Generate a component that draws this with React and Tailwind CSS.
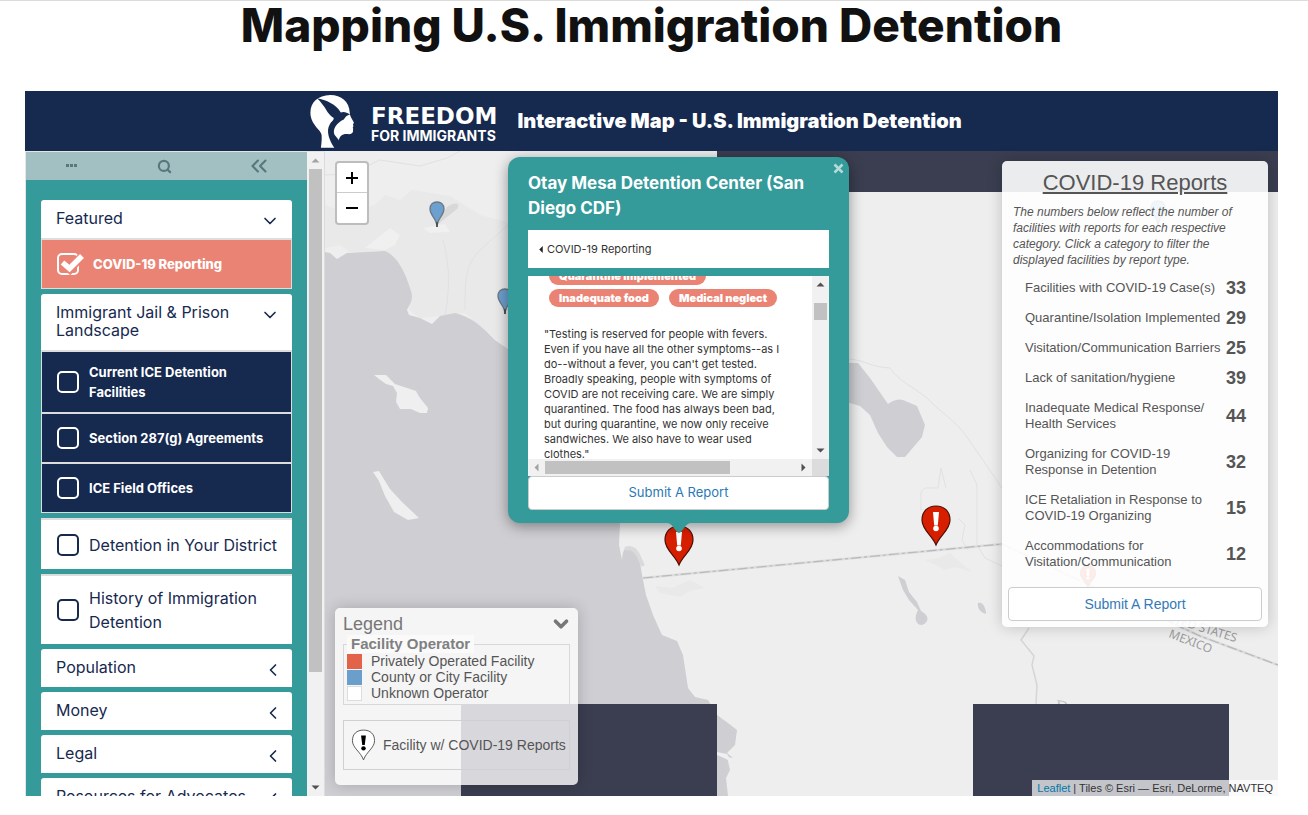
import { ChevronDown, ChevronLeft, ChevronsLeft, Search } from "lucide-react";

const cardFont = "font-['Inter','Open_Sans',sans-serif]";
const mapFont = "font-['Liberation_Sans',Arial,sans-serif]";

function Logo() {
  return (
    <a href="#home" className="flex items-center gap-4 text-white">
      <svg viewBox="272 282 134 160" className="h-[53px] w-[45px]" aria-hidden="true">
        <path
          fill="#fff"
          d="M304 441 C306 425 307 415 306 402 C303 388 278 375 273 345 C268 308 292 283 332 282 C366 282 390 302 391 335 C391 344 396 352 403 364 C405 368 400 369 401 372 C403 376 402 378 400 380 C402 383 401 385 401 388 C402 396 396 401 385 400 C366 399 362 407 358 418 L345 441 Z"
        />
        <path
          fill="#16294f"
          d="M292 292 C320 297 350 310 364 335 C372 331 382 334 392 341 C382 343 378 349 373 356 C352 366 338 385 345 402 L358 418 L362 442 L345 442 C330 420 318 390 331 370 C336 363 345 357 342 351 C325 340 322 328 313 316 C306 308 302 300 292 292 Z"
        />
      </svg>
      <span className="flex flex-col pt-1">
        <span className="font-['DejaVu_Sans',sans-serif] text-[23px] leading-[24px] font-bold">FREEDOM</span>
        <span className="font-['Inter',sans-serif] text-[14px] leading-[15px] font-bold">FOR IMMIGRANTS</span>
      </span>
    </a>
  );
}

function CheckRow({ label, checked = false, tone }) {
  const tones = {
    coral: "bg-[#ea8374] text-white font-extrabold text-[13px] leading-5 min-h-[51px] border-x border-b border-t-2 border-[#dddddd] pl-[15px] pr-4",
    navy: "bg-[#16294f] text-white font-bold text-[13px] leading-5 min-h-[50px] border-x border-t-2 border-[#dddddd] last:border-b last:min-h-[51px] pl-[15px] pr-4",
    white: "bg-white text-[#16294f] text-base leading-6 border-t-2 border-[#dddddd] min-h-[51px] pl-4 pr-1",
  };
  return (
    <label className={`flex items-center gap-2.5 py-[10px] ${tones[tone]}`}>
      <span className="relative flex shrink-0">
        <input
          type="checkbox"
          defaultChecked={checked}
          className="peer size-[22px] appearance-none rounded-[5px] border-2 border-current"
        />
        <svg viewBox="0 0 28 24" className="pointer-events-none absolute top-0 left-0 hidden h-6 w-7 peer-checked:block" aria-hidden="true">
          <path d="M7 11 L13 16.500 L24 4" fill="none" stroke="#ea8374" strokeWidth="8" />
          <path d="M5.500 9.500 L12.500 15.500 L25 3" fill="none" stroke="currentColor" strokeWidth="5.500" />
        </svg>
      </span>
      <span className={checked ? "pl-1" : ""}>{label}</span>
    </label>
  );
}

function SectionButton({ label, open = false }) {
  return (
    <button
      type="button"
      aria-expanded={open}
      className="flex w-full shrink-0 items-start justify-between gap-4 rounded-t-[3px] bg-white px-[15px] pt-[9px] pb-[11px] text-left text-base leading-[18px] text-[#16294f]"
    >
      <span className={open ? "" : "whitespace-nowrap"}>{label}</span>
      {open ? (
        <ChevronDown className="mt-0.5 -mr-[3px] -mb-4 size-5 shrink-0" strokeWidth={2} />
      ) : (
        <ChevronLeft className="mt-0.5 -mr-1.5 -mb-4 size-5 shrink-0" strokeWidth={2} />
      )}
    </button>
  );
}

function Arrow({ dir, muted = false }) {
  const paths = {
    up: "M4.500 10.500 L8.500 6.500 L12.500 10.500 Z",
    down: "M4.500 6.500 L8.500 10.500 L12.500 6.500 Z",
    left: "M10.500 4.500 L6.500 8.500 L10.500 12.500 Z",
    right: "M6.500 4.500 L10.500 8.500 L6.500 12.500 Z",
  };
  return (
    <svg viewBox="0 0 17 17" className="size-[17px] shrink-0" aria-hidden="true">
      <path d={paths[dir]} fill={muted ? "#a3a3a3" : "#505050"} />
    </svg>
  );
}

function Sidebar() {
  return (
    <div className="flex shrink-0 border-t border-l border-[#e5e5e5]">
      <nav className={`flex w-[281px] flex-col overflow-hidden bg-[#349a9a] ${cardFont}`}>
        <div className="flex h-7 shrink-0 items-center justify-between bg-[#a2bfc1] pr-[35px] pl-[40px] text-[#55797d]">
          <button type="button" aria-label="Menu" className="flex gap-px pb-0.5">
            <i className="size-[3px] bg-current" />
            <i className="size-[3px] bg-current" />
            <i className="size-[3px] bg-current" />
          </button>
          <button type="button" aria-label="Search" className="pl-1.5"><Search className="size-[15px]" strokeWidth={3.5} /></button>
          <button type="button" aria-label="Collapse">
            <ChevronsLeft className="size-[26px]" strokeWidth={2} />
          </button>
        </div>
        <div className="flex flex-col gap-[5px] px-[15px] pt-5">
          <section>
            <SectionButton label="Featured" open />
            <CheckRow label="COVID-19 Reporting" tone="coral" checked />
          </section>
          <section>
            <SectionButton label="Immigrant Jail & Prison Landscape" open />
            <CheckRow label="Current ICE Detention Facilities" tone="navy" />
            <CheckRow label="Section 287(g) Agreements" tone="navy" />
            <CheckRow label="ICE Field Offices" tone="navy" />
          </section>
          <CheckRow label="Detention in Your District" tone="white" />
          <CheckRow label="History of Immigration Detention" tone="white" />
          <SectionButton label="Population" />
          <SectionButton label="Money" />
          <SectionButton label="Legal" />
          <SectionButton label="Resources for Advocates" />
        </div>
      </nav>
      <div className="flex w-[18px] flex-col items-center border-r border-[#dcdcdc] bg-[#f1f1f1]" aria-hidden="true">
        <Arrow dir="up" muted />
        <div className="w-[13px] basis-[503px] bg-[#c1c1c1]" />
        <div className="flex-1" />
        <Arrow dir="down" />
      </div>
    </div>
  );
}

function RedPin({ x, y, scale = 1, opacity = 1 }) {
  return (
    <g transform={`translate(${x} ${y}) scale(${scale})`} opacity={opacity}>
      <path d="M0 0 C-4 -10 -14 -15 -14 -25 C-14 -34 -8 -39 0 -39 C8 -39 14 -34 14 -25 C14 -15 4 -10 0 0 Z" fill="#d71f00" stroke="#4a1008" strokeWidth="1.200" />
      <path d="M-3 -33 H3 L1.800 -19.500 H-1.800 Z" fill="#fff" />
      <circle cx="0" cy="-16.500" r="2.800" fill="#fff" />
    </g>
  );
}

function BluePin({ x, y }) {
  return (
    <g transform={`translate(${x} ${y})`}>
      <path d="M0 -2 L10 -20 C18 -26 24 -24 20 -18 Z" fill="#000" opacity="0.070" />
      <path d="M0 0 C0 -9 -7 -11 -7 -18 C-7 -22.500 -4 -25 0 -25 C4 -25 7 -22.500 7 -18 C7 -11 0 -9 0 0 Z" fill="#6ba0cf" stroke="#6b7885" strokeWidth="1.300" />
      <path d="M0 0 V-5" stroke="#444" strokeWidth="1.500" />
    </g>
  );
}

function MapCanvas() {
  return (
    <svg className="absolute inset-0 size-full" role="img" aria-label="Map of Southern California and northern Baja California">
      <g transform="translate(-325 -151)">
        <path fill="#e9e9e9" d="M325 205 L345 212 L375 205 L385 195 L400 200 L412 190 L450 196 L480 215 L508 222 V350 L480 325 L465 313 L440 316 L420 318 L409 310 L412 297 L400 265 L385 251 L350 252 L340 245 L325 248 Z" />
        <path fill="#f0f0f0" d="M375 240 L390 228 L400 235 L395 245 L385 250 L365 248 Z M423 228 L445 224 L450 232 L430 233 Z" />
        <g fill="none" stroke="#e1e1e3" strokeWidth="1">
          <path d="M325 175 L350 174 L380 160 L420 166 L447 158 L460 151" />
          <path d="M443 240 C450 265 450 290 445 315 M465 310 C465 280 465 265 480 250 L508 225" />
          <path d="M849 359 C865 360 870 367 890 368 C898 380 910 385 927 398 C940 412 955 420 967 437 L1002 488" />
          <path d="M921 510 V492 L925 488 H938 L941 468 L946 488" />
          <path d="M970 470 L977 485 V545 L985 558 L1002 566" />
          <path d="M958 518 L965 525 L962 540 L968 550" />
        </g>
        <path
          fill="#cfced3"
          d="M325 252 L330 253 L337 259 L347 253 L385 251 C398 256 406 275 410 288 C415 300 409 305 407 310 L409 315 L420 318 L432 324 L440 316 L455 313 C475 318 485 330 495 340 L512 352 L560 420 L605 500 L620 524 L619 545 L622 560 C623 543 630 545 636 554 L640 563 L643 580 L646 595 L653 615 L662 635 L677 641 L683 655 L688 688 L695 697 L708 700 L717 715 L728 723 L737 730 L735 745 L727 753 L733 758 L727 757 L730 770 L726 778 L728 796 V1200 H325 Z"
        />
        <g fill="#efeff0">
          <path d="M374 375 L386 375 L392 381 L395 384 L404 387 L416 391 L420 398 L428 408 L427 413 L420 413 L411 409 L400 409 L396 402 L397 393 L393 386 L386 384 L379 379 Z" />
          <path d="M373 472 L379 471 L390 489 L402 502 L419 518 L408 520 L394 512 L385 496 L379 481 Z" />
          <path d="M717 752 L727 754 L732 762 L724 758 L717 755 Z" />
        </g>
        <path fill="#cfced3" d="M840 363 L858 363 L870 378 L888 404 C895 399 900 399 903 400 L917 406 L925 425 L922 437 L905 457 L897 457 L887 447 L878 433 L870 415 L860 406 L840 400 Z" />
        <g fill="#cfced3">
          <path d="M898 576 L905 580 L909 592 L917 602 L921 611 C929 615 930 622 922 625 C915 625 914 617 918 610 L909 600 L903 590 Z" />
          <path d="M978 603 C983 601 986 608 986 614 C980 612 977 608 978 603 Z" />
        </g>
        <path d="M625 549 C632 546 636 550 639 557 L643 566" fill="none" stroke="#dadadc" strokeWidth="4" />
        <path fill="#e9e9e9" d="M655 586 L672 588 L690 580 L705 588 L690 591 L680 597 L660 593 Z M925 560 L940 558 L950 553 L960 562 L972 572 L955 567 L945 570 Z" />
        <path d="M643 578 L1002 544 L1100 590 L1200 636 L1278 665" fill="none" stroke="#dcdcde" strokeWidth="2.500" />
        <path d="M643 578 L1002 544 L1100 590 L1200 636 L1278 665" fill="none" stroke="#b9b9bc" strokeWidth="1.200" strokeDasharray="10 3 3 3" />
        <path d="M1029 628 L1021 640 L1034 656 L1032 665 L1037 685 L1036 704" fill="none" stroke="#d5d5d7" strokeWidth="1.500" />
        <g className="font-['Noto_Sans',sans-serif]" fill="#9b9b9d">
          <text x="1153" y="617" fontSize="12" transform="rotate(17 1153 617)">UNITED STATES</text>
          <text x="1168" y="637" fontSize="12" transform="rotate(21 1168 637)">MEXICO</text>
        </g>
        <text x="1055" y="711" fontSize="17" fill="#c4c4c6" transform="rotate(8 1055 711)" className="font-['Liberation_Serif',serif]">D</text>
        <BluePin x={437} y={227} />
        <BluePin x={505} y={314} />
        <BluePin x={1158} y={226} />
        <g fill="#3b3e50">
          <rect x="717" y="151" width="4000" height="41" />
          <rect x="461" y="704" width="256" height="256" />
          <rect x="973" y="704" width="256" height="256" />
        </g>
        <RedPin x={679} y={565} />
        <RedPin x={936} y={545} />
        <RedPin x={1088} y={587} scale={0.55} opacity={0.8} />
      </g>
    </svg>
  );
}

const pill = "rounded-[9px] bg-[#ea8374] px-2.5 text-[11px] leading-[18px] font-black text-white";

function FacilityPopup() {
  return (
    <section className={`absolute top-[6px] left-[183px] w-[341px] rounded-xl bg-[#349a9a] px-5 pt-[14px] pb-[13px] shadow-[0_3px_14px_rgba(0,0,0,0.4)] ${cardFont}`}>
      <button type="button" aria-label="Close" className="absolute top-[6px] right-[5px] text-[#b5dada]">
        <svg viewBox="0 0 11 11" className="size-[11px]" aria-hidden="true">
          <path d="M1.500 1.500 L9.500 9.500 M9.500 1.500 L1.500 9.500" stroke="currentColor" strokeWidth="2.500" />
        </svg>
      </button>
      <h2 className="text-[17px] leading-[25px] font-bold text-white">Otay Mesa Detention Center (San Diego CDF)</h2>
      <button type="button" className="mt-[9px] flex h-[38px] w-full items-center gap-1 bg-white px-[11px] text-[11px] text-[#333]">
        <svg viewBox="0 0 4 8" className="h-[7px] w-1" aria-hidden="true"><path d="M4 0 V8 L0 4 Z" fill="#222" /></svg>
        COVID-19 Reporting
      </button>
      <div className="mt-2 grid h-[200px] grid-cols-[1fr_17px] grid-rows-[1fr_17px] bg-[#f1f1f1]">
        <div className="min-h-0 overflow-hidden bg-white px-4">
          <div className="-mt-[9px] flex flex-wrap gap-x-2.5 gap-y-1 pl-[5px]">
            <span className={pill}>Quarantine Implemented</span>
            <span className={pill}>Inadequate food</span>
            <span className={pill}>Medical neglect</span>
          </div>
          <p className="mt-5 w-[240px] text-[11px] leading-[15px] text-[#333]">
            "Testing is reserved for people with fevers. Even if you have all the other symptoms--as I do--without a fever, you can't get tested. Broadly speaking, people with symptoms of COVID are not receiving care. We are simply quarantined. The food has always been bad, but during quarantine, we now only receive sandwiches. We also have to wear used clothes."
          </p>
        </div>
        <div className="flex flex-col items-center" aria-hidden="true">
          <Arrow dir="up" />
          <div className="mt-2.5 h-[17px] w-[13px] bg-[#c1c1c1]" />
          <div className="flex-1" />
          <Arrow dir="down" />
        </div>
        <div className="flex items-center" aria-hidden="true">
          <Arrow dir="left" muted />
          <div className="h-[13px] w-[185px] bg-[#c1c1c1]" />
          <div className="flex-1" />
          <Arrow dir="right" />
        </div>
        <div className="bg-[#dcdcdc]" />
      </div>
      <a href="#report" className="flex h-[34px] items-center justify-center rounded border border-[#ccc] bg-white text-[13px] text-[#2a7ab5]">Submit A Report</a>
      <svg viewBox="0 0 22 10" className="absolute top-full left-[160px] h-2.5 w-[22px]" aria-hidden="true">
        <path d="M0 0 H22 C17 1 14 10 11 10 C8 10 5 1 0 0 Z" fill="#349a9a" />
      </svg>
    </section>
  );
}

const reports = [
  ["Facilities with COVID-19 Case(s)", 33],
  ["Quarantine/Isolation Implemented", 29],
  ["Visitation/Communication Barriers", 25],
  ["Lack of sanitation/hygiene", 39],
  ["Inadequate Medical Response/ Health Services", 44],
  ["Organizing for COVID-19 Response in Detention", 32],
  ["ICE Retaliation in Response to COVID-19 Organizing", 15],
  ["Accommodations for Visitation/Communication", 12],
];

function ReportsPanel() {
  return (
    <section className={`absolute top-2.5 right-2.5 w-[266px] rounded-[5px] bg-white/90 p-1.5 text-[#555] shadow-[0_0_15px_rgba(0,0,0,0.2)] ${mapFont}`}>
      <h2 className="pt-[3px] text-center text-[22px] leading-[26px] underline">COVID-19 Reports</h2>
      <p className="mt-2 px-[5px] text-xs leading-4 italic">
        The numbers below reflect the number of facilities with reports for each respective category. Click a category to filter the displayed facilities by report type.
      </p>
      <table className="mt-[5px] ml-[17px]">
        <tbody>
          {reports.map(([label, count]) => (
            <tr key={label}>
              <th scope="row" className="py-[7px] text-left text-[13px] leading-4 font-normal">
                <button type="button" className="w-[197px] text-left align-top">{label}</button>
              </th>
              <td className="py-0 pl-1 text-lg leading-4 font-bold">{count}</td>
            </tr>
          ))}
        </tbody>
      </table>
      <a href="#report" className="mt-[10px] flex h-[34px] items-center justify-center rounded border border-[#ccc] bg-white text-sm text-[#337ab7]">Submit A Report</a>
    </section>
  );
}

function LegendPanel() {
  const operators = [
    ["Privately Operated Facility", "bg-[#e2624a] border-[#e2624a]"],
    ["County or City Facility", "bg-[#6b9fcb] border-[#6b9fcb]"],
    ["Unknown Operator", "bg-white border-[#ddd]"],
  ];
  return (
    <section className={`absolute bottom-[11px] left-2.5 w-[243px] rounded-[5px] bg-white/80 px-2 pt-[5px] pb-[15px] text-sm leading-4 text-[#555] shadow-[0_0_15px_rgba(0,0,0,0.2)] ${mapFont}`}>
      <button type="button" className="flex w-full items-center justify-between text-lg leading-[18px] text-[#777]">
        Legend
        <ChevronDown className="-mr-0.5 size-[22px]" strokeWidth={4} />
      </button>
      <fieldset className="border border-[#d8d8da] px-[3px] pb-[3px]">
        <legend className="bg-white/50 px-1 text-[15px] leading-[18px] font-bold text-[#808080]">Facility Operator</legend>
        <ul>
          {operators.map(([name, swatch]) => (
            <li key={name} className="flex items-center gap-[9px]">
              <span className={`size-[15px] border ${swatch}`} />
              {name}
            </li>
          ))}
        </ul>
      </fieldset>
      <div className="mt-[15px] flex h-[50px] items-center gap-[7px] border border-[#d0d0d3] px-[7px] whitespace-nowrap">
        <svg viewBox="0 0 26 34" className="h-[34px] w-[25px] shrink-0" aria-hidden="true">
          <path d="M13 32.500 C10 24 1.500 20 1.500 12.500 C1.500 5.500 6 1.500 13 1.500 C20 1.500 24.500 5.500 24.500 12.500 C24.500 20 16 24 13 32.500 Z" fill="#fff" stroke="#555" />
          <path d="M10.500 7 H15.500 L14.300 17 H11.700 Z" fill="#000" />
          <circle cx="13" cy="20.500" r="2.300" fill="#000" />
        </svg>
        Facility w/ COVID-19 Reports
      </div>
    </section>
  );
}

export default function App() {
  return (
    <main className="border-t border-[#dcdcdc] bg-white pr-[30px] pl-[25px]">
      <h1 className="pb-[42px] text-center font-['Inter',sans-serif] text-[46px] leading-[48px] font-extrabold text-[#111]">
        Mapping U.S. Immigration Detention
      </h1>
      <div>
        <header className="flex h-[60px] items-center gap-5 bg-[#16294f] pl-[285px]">
          <Logo />
          <p className="font-['Inter',sans-serif] text-xl font-black text-white">Interactive Map - U.S. Immigration Detention</p>
        </header>
        <div className="flex h-[645px]">
          <Sidebar />
          <div className="relative min-w-0 flex-1 overflow-hidden bg-[#eeeeee]">
            <MapCanvas />
            <div className={`absolute top-2.5 left-2.5 flex flex-col rounded border-2 border-[#bdbdbd] bg-white text-black ${mapFont}`}>
              <button type="button" aria-label="Zoom in" className="flex size-[30px] items-center justify-center border-b border-[#ccc]">
                <svg viewBox="0 0 12 12" className="size-3" aria-hidden="true"><path d="M6 0 V12 M0 6 H12" stroke="#000" strokeWidth="2" /></svg>
              </button>
              <button type="button" aria-label="Zoom out" className="flex size-[30px] items-center justify-center">
                <svg viewBox="0 0 12 12" className="size-3" aria-hidden="true"><path d="M0 6 H12" stroke="#000" strokeWidth="2" /></svg>
              </button>
            </div>
            <LegendPanel />
            <FacilityPopup />
            <ReportsPanel />
            <p className={`absolute right-0 bottom-0 bg-white/70 px-[5px] text-[11px] leading-4 text-[#333] ${mapFont}`}>
              <a href="#leaflet" className="text-[#0078a8]">Leaflet</a> | Tiles © Esri — Esri, DeLorme, NAVTEQ
            </p>
          </div>
        </div>
      </div>
    </main>
  );
}
